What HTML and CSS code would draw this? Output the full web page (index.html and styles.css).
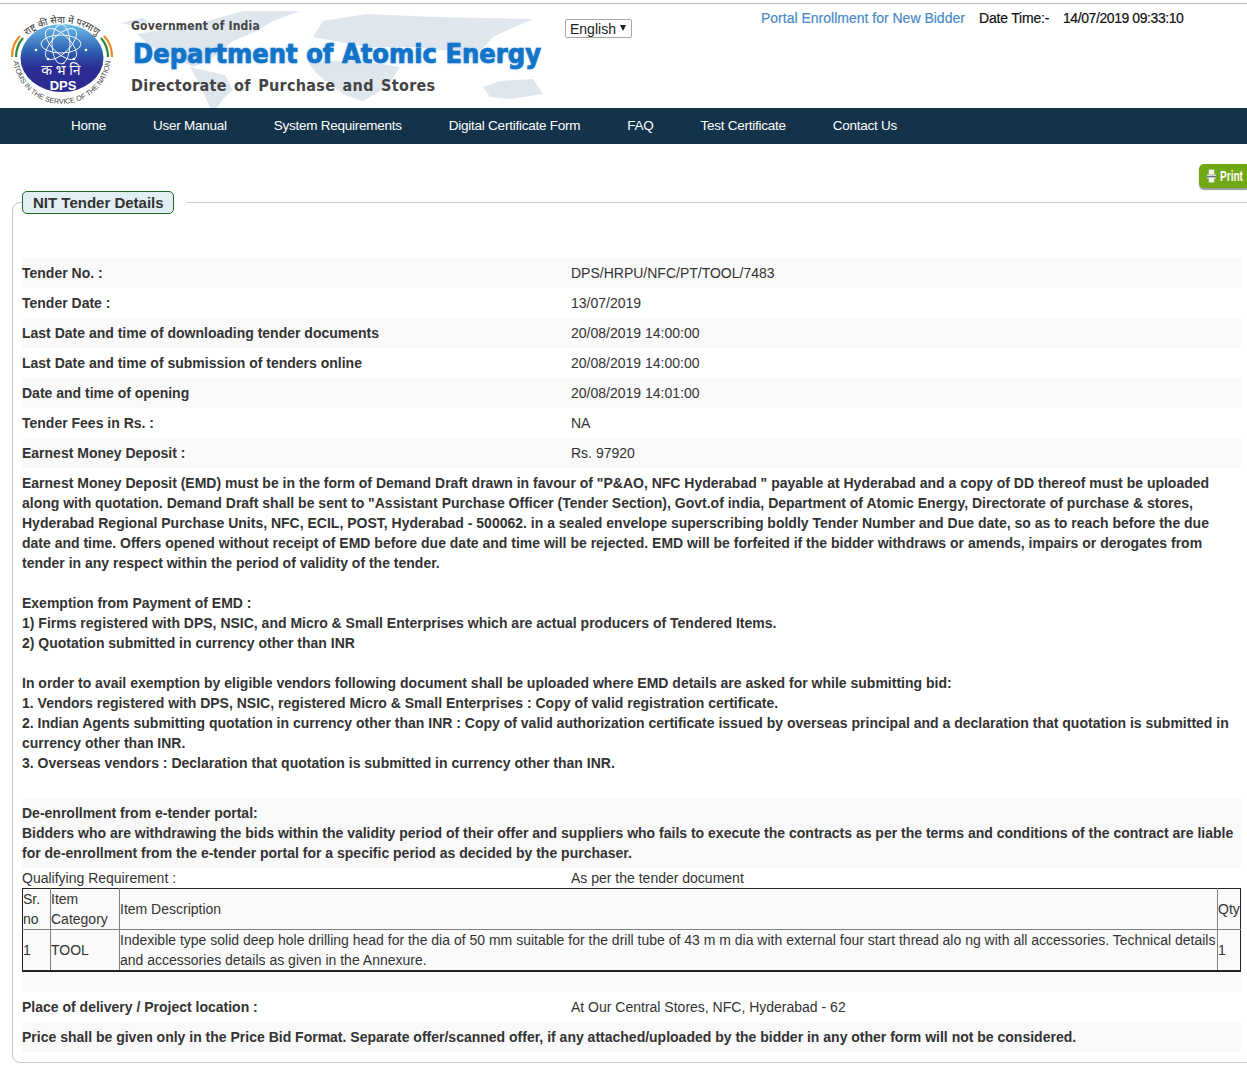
FILE: index.html
```html
<!DOCTYPE html>
<html lang="en">
<head>
<meta charset="utf-8">
<title>NIT Tender Details</title>
<link rel="stylesheet" href="styles.css">
</head>
<body>
<header class="top">
  <div class="banner">
    <svg class="map" viewBox="0 0 550 108" aria-hidden="true">
      <path d="M120 23 L142 18 L150 22 L134 26 Z"/>
      <path d="M137 34 L197 24 L243 11 L300 11 L273 21 L257 31 L233 41 L210 60 L193 67 L176 58 L150 46 Z"/>
      <path d="M190 67 L225 75 L233 90 L222 100 L217 108 L210 108 L200 85 Z"/>
      <path d="M323 21 L367 14 L433 17 L533 19 L510 29 L493 37 L487 44 L467 61 L450 51 L413 47 L367 47 L313 37 Z"/>
      <path d="M307 61 L360 61 L400 67 L387 87 L363 101 L343 94 L317 74 Z"/>
      <path d="M483 87 L500 81 L533 79 L543 94 L510 99 L490 97 Z"/>
    </svg>
    <svg class="logo" viewBox="0 0 125 108" aria-hidden="true">
      <defs>
        <linearGradient id="globe" x1="0" y1="0" x2="0" y2="1">
          <stop offset="0" stop-color="#6dbfe9"/>
          <stop offset=".4" stop-color="#2d5fb2"/>
          <stop offset=".65" stop-color="#2b2c92"/>
          <stop offset="1" stop-color="#2b2c92"/>
        </linearGradient>
        <path id="arcTop" d="M7 78 A55 55 0 0 1 117 78"/>
        <path id="arcBottom" d="M14 45 A49 49 0 1 0 110 45"/>
      </defs>
      <path d="M12 57 Q12 44 20 36" class="saffron"/>
      <path d="M16 57 Q16 46 23 38" class="green"/>
      <path d="M112 57 Q112 44 104 36" class="saffron"/>
      <path d="M108 57 Q108 46 101 38" class="green"/>
      <ellipse cx="62" cy="58" rx="41.500" ry="34" fill="url(#globe)"/>
      <g class="orbits">
        <ellipse cx="61" cy="44" rx="9" ry="20"/>
        <ellipse cx="61" cy="44" rx="9" ry="20" transform="rotate(45 61 44)"/>
        <ellipse cx="61" cy="44" rx="9" ry="20" transform="rotate(90 61 44)"/>
        <ellipse cx="61" cy="44" rx="9" ry="20" transform="rotate(135 61 44)"/>
      </g>
      <circle class="dot" cx="48" cy="59" r="1.300"/>
      <circle class="dot" cx="74" cy="59" r="1.300"/>
      <circle class="dot" cx="36" cy="50" r="1.300"/>
      <circle class="dot" cx="86" cy="50" r="1.300"/>
      <text class="seal-top"><textPath href="#arcTop" startOffset="50%" text-anchor="middle">राष्ट्र की सेवा में परमाणु</textPath></text>
      <text class="seal-bottom"><textPath href="#arcBottom" startOffset="50%" text-anchor="middle">ATOMS IN THE SERVICE OF THE NATION</textPath></text>
      <text x="61" y="75" class="seal-hi" text-anchor="middle">क भं नि</text>
      <text x="63" y="90" class="seal-dps" text-anchor="middle">DPS</text>
    </svg>
    <div class="org">
      <div class="gov">Government of India</div>
      <div class="dept">Department of Atomic Energy</div>
      <div class="dir">Directorate of Purchase and Stores</div>
    </div>
  </div>
  <div class="lang"><span>English</span><i class="caret"></i></div>
  <div class="meta">
    <a class="portal" href="#">Portal Enrollment for New Bidder</a>
    <span class="dt-label">Date Time:-</span>
    <span class="dt-value">14/07/2019 09:33:10</span>
  </div>
</header>
<nav class="nav">
  <a href="#">Home</a>
  <a href="#">User Manual</a>
  <a href="#">System Requirements</a>
  <a href="#">Digital Certificate Form</a>
  <a href="#">FAQ</a>
  <a href="#">Test Certificate</a>
  <a href="#">Contact Us</a>
</nav>
<div class="tools">
  <a class="print" href="#">
    <svg viewBox="0 0 12 16" aria-hidden="true"><rect x="3" y="1" width="6" height="5" fill="#eef0f0"/><rect x="1" y="6" width="10" height="5" rx="1" fill="#d5d9dc"/><rect x="1" y="8" width="10" height="1.500" fill="#6d7680"/><rect x="3" y="10" width="6" height="5" fill="#f4f5f5"/></svg>
    <span>Print</span>
  </a>
</div>
<fieldset class="panel">
  <legend><span class="pill">NIT Tender Details</span></legend>
  <div class="rows">
    <div class="row alt"><b>Tender No. :</b><span>DPS/HRPU/NFC/PT/TOOL/7483</span></div>
    <div class="row"><b>Tender Date :</b><span>13/07/2019</span></div>
    <div class="row alt"><b>Last Date and time of downloading tender documents</b><span>20/08/2019 14:00:00</span></div>
    <div class="row"><b>Last Date and time of submission of tenders online</b><span>20/08/2019 14:00:00</span></div>
    <div class="row alt"><b>Date and time of opening</b><span>20/08/2019 14:01:00</span></div>
    <div class="row"><b>Tender Fees in Rs. :</b><span>NA</span></div>
    <div class="row alt"><b>Earnest Money Deposit :</b><span>Rs. 97920</span></div>
    <div class="note">Earnest Money Deposit (EMD) must be in the form of Demand Draft drawn in favour of "P&amp;AO, NFC Hyderabad " payable at Hyderabad and a copy of DD thereof must be uploaded along with quotation. Demand Draft shall be sent to "Assistant Purchase Officer (Tender Section), Govt.of india, Department of Atomic Energy, Directorate of purchase &amp; stores, Hyderabad Regional Purchase Units, NFC, ECIL, POST, Hyderabad - 500062. in a sealed envelope superscribing boldly Tender Number and Due date, so as to reach before the due date and time. Offers opened without receipt of EMD before due date and time will be rejected. EMD will be forfeited if the bidder withdraws or amends, impairs or derogates from tender in any respect within the period of validity of the tender.<br><br>Exemption from Payment of EMD :<br>1) Firms registered with DPS, NSIC, and Micro &amp; Small Enterprises which are actual producers of Tendered Items.<br>2) Quotation submitted in currency other than INR<br><br>In order to avail exemption by eligible vendors following document shall be uploaded where EMD details are asked for while submitting bid:<br>1. Vendors registered with DPS, NSIC, registered Micro &amp; Small Enterprises : Copy of valid registration certificate.<br>2. Indian Agents submitting quotation in currency other than INR : Copy of valid authorization certificate issued by overseas principal and a declaration that quotation is submitted in currency other than INR.<br>3. Overseas vendors : Declaration that quotation is submitted in currency other than INR.</div>
    <div class="note alt enroll">De-enrollment from e-tender portal:<br>Bidders who are withdrawing the bids within the validity period of their offer and suppliers who fails to execute the contracts as per the terms and conditions of the contract are liable for de-enrollment from the e-tender portal for a specific period as decided by the purchaser.</div>
    <div class="row qual"><span>Qualifying Requirement :</span><span>As per the tender document</span></div>
    <table class="items">
      <tr><td class="c-sr">Sr. no</td><td class="c-cat">Item Category</td><td>Item Description</td><td class="c-qty">Qty</td></tr>
      <tr><td>1</td><td>TOOL</td><td>Indexible type solid deep hole drilling head for the dia of 50 mm suitable for the drill tube of 43 m m dia with external four start thread alo ng with all accessories. Technical details and accessories details as given in the Annexure.</td><td>1</td></tr>
    </table>
    <div class="spacer alt"></div>
    <div class="row"><b>Place of delivery / Project location :</b><span>At Our Central Stores, NFC, Hyderabad - 62</span></div>
    <div class="row alt price"><b>Price shall be given only in the Price Bid Format. Separate offer/scanned offer, if any attached/uploaded by the bidder in any other form will not be considered.</b></div>
  </div>
</fieldset>
</body>
</html>
```

FILE: styles.css
```css
* { box-sizing: border-box; }
html, body { margin: 0; padding: 0; }
body {
  width: 1247px;
  height: 1076px;
  overflow: hidden;
  background: #fff;
  color: #333;
  font: 14px/20px "Liberation Sans", Arial, sans-serif;
}
a { text-decoration: none; }

.top {
  position: relative;
  margin-top: 3px;
  height: 105px;
  border-top: 1px solid #b9b9b9;
  display: flex;
}
.banner {
  position: relative;
  width: 550px;
  height: 104px;
  overflow: hidden;
}
.map {
  position: absolute;
  left: 0;
  top: -4px;
  width: 550px;
  height: 108px;
  fill: #dfe6ee;
}
.logo {
  position: absolute;
  left: 0;
  top: -4px;
  width: 125px;
  height: 108px;
  overflow: visible;
}
.saffron { fill: none; stroke: #f08a24; stroke-width: 2.200; }
.green { fill: none; stroke: #2c8a3c; stroke-width: 2.200; }
.orbits ellipse { fill: none; stroke: #fff; stroke-width: .9; }
.dot { fill: #fff; }
.seal-top { font: 9.500px "Noto Sans", "Noto Sans CJK SC", sans-serif; fill: #333; }
.seal-bottom { font: 7.200px "Liberation Sans", sans-serif; fill: #444; }
.seal-hi { font: 14px "Noto Sans", "DejaVu Sans", sans-serif; fill: #fff; }
.seal-dps { font: bold 13px "Liberation Sans", sans-serif; fill: #fff; }

.org {
  position: absolute;
  left: 131px;
  top: 13px;
  font-family: "DejaVu Sans Condensed", "DejaVu Sans", sans-serif;
  font-weight: bold;
  white-space: nowrap;
  color: #444;
}
.gov { font-size: 12px; line-height: 18px; letter-spacing: .2px; }
.dept {
  margin: 2px 0 4px 2px;
  font-size: 27px;
  line-height: 34px;
  color: #1273c8;
  -webkit-text-stroke: .7px #1273c8;
  text-shadow: 0 0 1px #bcdcf5, 0 0 3px #9ccbf0;
}
.dir { font-size: 16px; line-height: 22px; letter-spacing: .3px; word-spacing: 2px; }

.lang {
  position: absolute;
  left: 565px;
  top: 15px;
  width: 67px;
  height: 19px;
  border: 1px solid #a6a6a6;
  border-radius: 2px;
  padding-left: 4px;
  line-height: 18px;
  color: #222;
  background: #fff;
}
.caret {
  position: absolute;
  right: 5px;
  top: 5px;
  border-style: solid;
  border-width: 6px 3.500px 0;
  border-color: #222 transparent transparent;
}
.meta {
  position: absolute;
  left: 761px;
  top: 4px;
  display: flex;
  white-space: nowrap;
  font-size: 14px;
  line-height: 20px;
  -webkit-text-stroke: .2px currentColor;
}
.portal { color: #4a89c8; width: 218px; }
.dt-label { color: #111; width: 84px; letter-spacing: -.2px; }
.dt-value { color: #111; letter-spacing: -.42px; }

.nav {
  height: 36px;
  background: #13334a;
  display: flex;
  gap: 47px;
  padding-left: 71px;
  padding-bottom: 1px;
  align-items: center;
  font-size: 13.500px;
  letter-spacing: -.25px;
}
.nav a { color: #fff; }

.tools {
  display: flex;
  justify-content: flex-end;
  height: 47px;
  padding-top: 20px;
}
.print {
  display: flex;
  align-items: center;
  gap: 3px;
  width: 48px;
  height: 24px;
  padding-left: 7px;
  padding-bottom: 1px;
  border-radius: 5px 0 0 5px;
  background: #6fa812;
  box-shadow: 0 2px 1px #9a9a9a;
  color: #fff;
  font: bold 14px/22px "Liberation Sans", sans-serif;
}
.print svg { width: 11px; height: 16px; flex: none; }
.print span { display: inline-block; transform: scaleX(.72); transform-origin: left; }

.panel {
  margin: 0 -40px 0 12px;
  padding: 44px 46px 0 9px;
  height: 872px;
  border: 1px solid #c8c8c8;
  border-radius: 8px;
  min-width: 0;
}
.panel legend {
  padding: 0 13px 0 0;
}
.pill {
  display: block;
  height: 23px;
  width: 152px;
  padding-left: 10px;
  border: 1px solid #1f6b1f;
  border-radius: 5px;
  background: #e1eef2;
  color: #333;
  font-size: 15px;
  font-weight: bold;
  line-height: 21px;
  white-space: nowrap;
}
.rows { width: 1219px; }
.row {
  display: grid;
  grid-template-columns: 549px 1fr;
  height: 30px;
  align-items: center;
}
.alt { background: #f9f9f9; }
.row b { color: #333; }
.note {
  padding: 5px 0;
  font-weight: bold;
  color: #333;
}
.enroll { margin-top: 20px; }
.qual { height: 20px; }
.items {
  width: 1219px;
  border-collapse: collapse;
  border: 1px solid #222;
  border-bottom-width: 2px;
  background: #fafafa;
}
.items td {
  border: 1px solid #808080;
  padding: 0;
  line-height: 20px;
}
.items tr:first-child td { border-top-color: #222; }
.items td:first-child { border-left-color: #222; }
.items td:last-child { border-right-color: #222; }
.c-sr { width: 28px; }
.c-cat { width: 69px; }
.c-qty { width: 23px; }
.spacer { height: 20px; }
.price { display: block; line-height: 30px; }
```
